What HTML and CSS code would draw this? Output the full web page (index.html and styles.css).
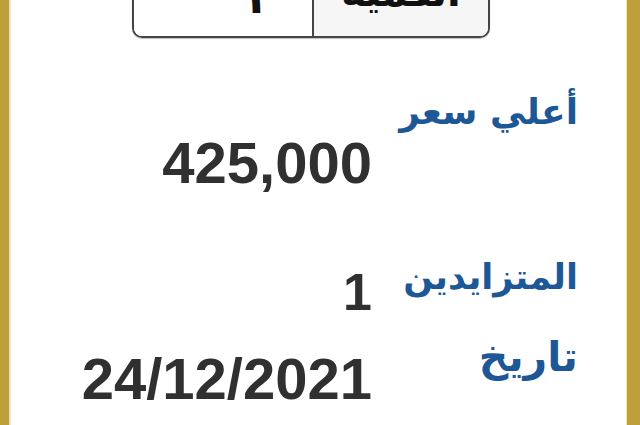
FILE: index.html
```html
<!DOCTYPE html>
<html lang="ar">
<head>
<meta charset="utf-8">
<link rel="stylesheet" href="styles.css">
</head>
<body>
<div class="frame">
  <div class="panel">
    <div class="qty">
      <div class="qty-label">الكمية</div>
      <div class="qty-value">١</div>
    </div>
    <div class="info">
      <div class="label l1">أعلي سعر</div>
      <div class="value v1">425,000</div>
      <div class="label l2">المتزايدين</div>
      <div class="value v2">1</div>
      <div class="label l3">تاريخ</div>
      <div class="value v3">24/12/2021</div>
    </div>
  </div>
</div>
</body>
</html>
```
FILE: styles.css
```css
html, body {
  margin: 0;
  padding: 0;
  background: #ffffff;
}
.frame {
  width: 640px;
  height: 425px;
  box-sizing: border-box;
  border-left: 9px solid #bd9f3b;
  border-right: 13px solid #bd9f3b;
  overflow: hidden;
}
.panel {
  display: flow-root;
  height: 100%;
  direction: rtl;
  box-shadow: inset 2px 0 0 #efe3bb, inset -1px 0 0 #efe3bb;
}
.qty {
  margin-top: -44px;
  margin-right: 137px;
  width: 358px;
  height: 82px;
  box-sizing: border-box;
  border: 2px solid #454545;
  border-radius: 10px;
  display: flex;
  overflow: hidden;
  box-shadow: 0 1px 1px rgba(0,0,0,0.25);
}
.qty-label {
  width: 176px;
  background: #f6f6f6;
  border-left: 2px solid #454545;
  font-family: "DejaVu Sans", sans-serif;
  font-weight: bold;
  font-size: 40px;
  color: #111;
  text-align: center;
  line-height: 1;
  padding-top: 14px;
  box-sizing: border-box;
}
.qty-value {
  flex: 1;
  background: #fff;
  font-family: "DejaVu Sans", sans-serif;
  font-weight: bold;
  font-size: 44px;
  color: #111;
  text-align: right;
  padding-right: 44px;
  line-height: 1;
  padding-top: 18px;
}
.info {
  display: grid;
  grid-template-columns: 206px auto;
  margin-right: 49px;
  margin-top: 49px;
  justify-content: start;
}
.label {
  grid-column: 1;
  font-family: "DejaVu Sans", sans-serif;
  font-weight: bold;
  font-size: 36px;
  color: #1d5796;
  line-height: 50px;
  text-align: right;
}
.value {
  grid-column: 2;
  font-family: "Liberation Sans", Arial, sans-serif;
  font-weight: bold;
  font-size: 58px;
  color: #303030;
  text-align: right;
  line-height: 58px;
}
.l1 { grid-row: 1; }
.v1 { grid-row: 2; margin-top: -3px; }
.l2 { grid-row: 3; margin-top: 60px; font-size: 35px; }
.v2 { grid-row: 3; margin-top: 71px; font-size: 52px; }
.l3 { grid-row: 4; margin-top: 11px; font-size: 41px; }
.v3 { grid-row: 4; margin-top: 29px; }
```
